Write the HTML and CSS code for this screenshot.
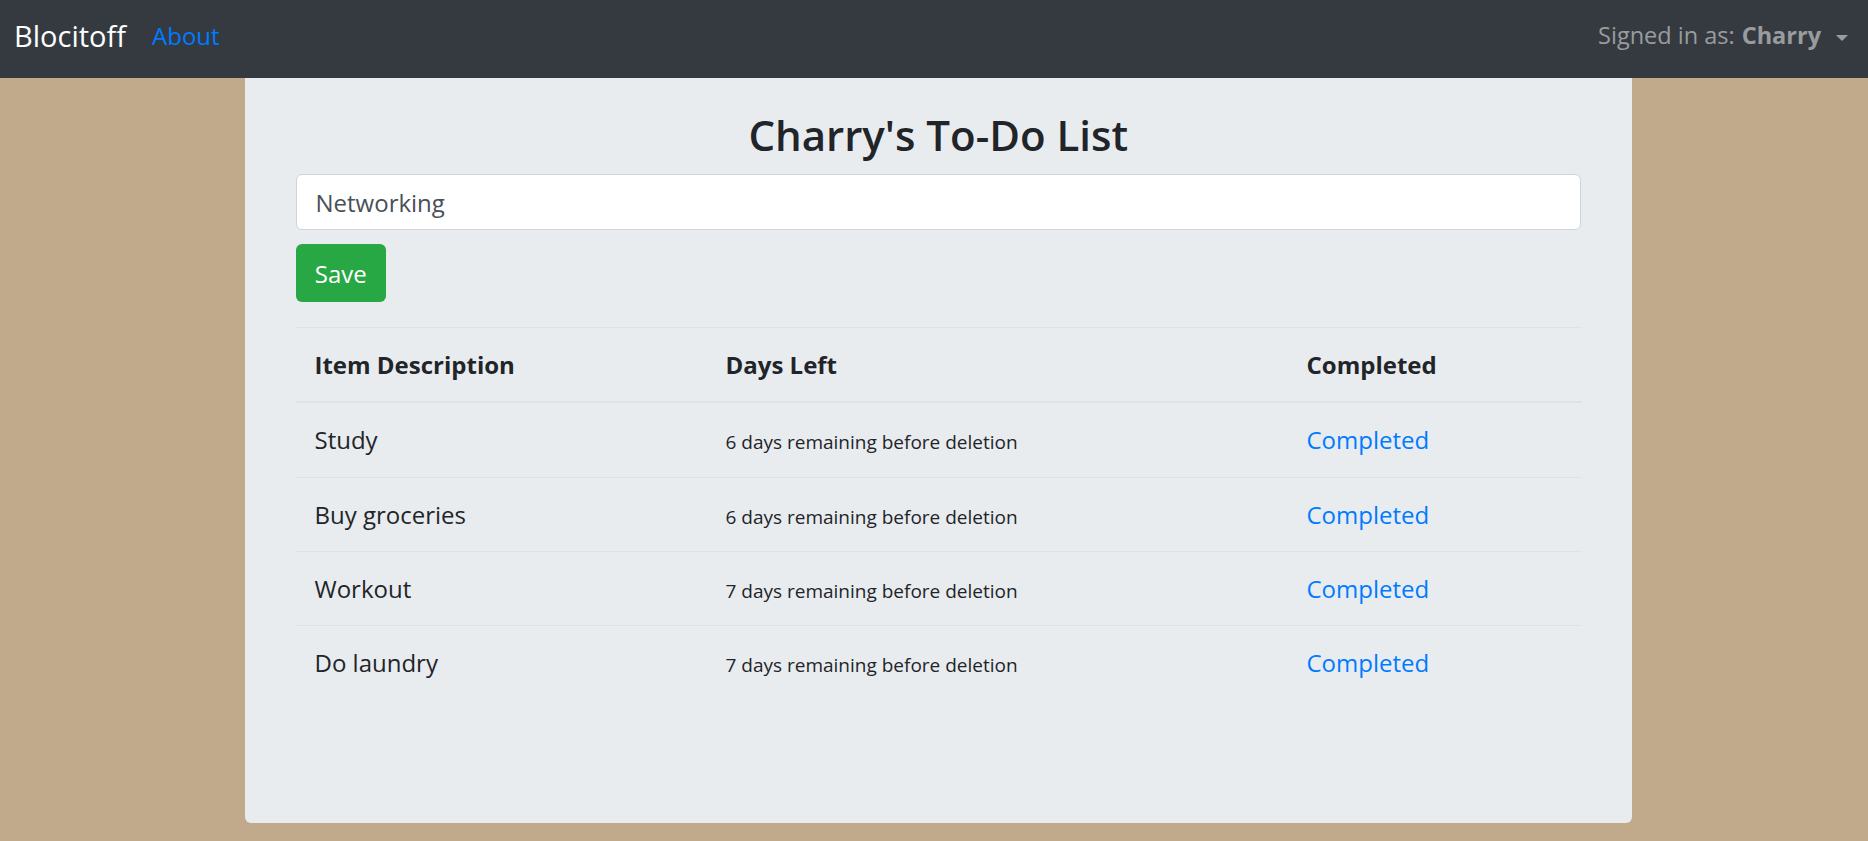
FILE: index.html
```html
<!DOCTYPE html>
<html lang="en">
<head>
<meta charset="utf-8">
<title>Blocitoff</title>
<link rel="stylesheet" href="styles.css">
</head>
<body>
<nav class="navbar">
  <a class="brand" href="#">Blocitoff</a>
  <a class="nav-about" href="#">About</a>
  <div class="user">Signed in as: <strong>Charry</strong><span class="caret"></span></div>
</nav>
<main class="card">
  <h1 class="title">Charry's To-Do List</h1>
  <form class="form">
    <input class="field" type="text" value="Networking">
    <button class="btn-save" type="button">Save</button>
  </form>
  <table class="items">
    <colgroup>
      <col class="c1"><col class="c2"><col class="c3">
    </colgroup>
    <thead>
      <tr><th>Item Description</th><th>Days Left</th><th>Completed</th></tr>
    </thead>
    <tbody>
      <tr><td>Study</td><td><small>6 days remaining before deletion</small></td><td><a href="#">Completed</a></td></tr>
      <tr><td>Buy groceries</td><td><small>6 days remaining before deletion</small></td><td><a href="#">Completed</a></td></tr>
      <tr><td>Workout</td><td><small>7 days remaining before deletion</small></td><td><a href="#">Completed</a></td></tr>
      <tr><td>Do laundry</td><td><small>7 days remaining before deletion</small></td><td><a href="#">Completed</a></td></tr>
    </tbody>
  </table>
</main>
</body>
</html>
```

FILE: styles.css
```css
* { box-sizing: border-box; }
html, body { margin: 0; padding: 0; }
body {
  background: #c1a98b;
  font-family: "Open Sans", "Noto Sans", sans-serif;
  color: #212529;
  font-size: 24px;
  line-height: 1.5;
}
a { text-decoration: none; color: #007bff; }

.navbar {
  height: 78px;
  background: #343a40;
  display: flex;
  align-items: center;
  padding: 0 20px 6px 14px;
}
.brand {
  color: #fff;
  font-size: 29px;
  line-height: 1.5;
  margin-right: 26px;
}
.nav-about {
  color: #007bff;
  font-size: 24px;
}
.user {
  margin-left: auto;
  color: rgba(255, 255, 255, 0.5);
  font-size: 23.5px;
  display: flex;
  align-items: center;
}
.user strong { font-weight: 700; margin-left: 7px; }
.caret {
  width: 0;
  height: 0;
  border-left: 6px solid transparent;
  border-right: 6px solid transparent;
  border-top: 6px solid rgba(255, 255, 255, 0.5);
  margin-left: 15px;
  margin-top: 4px;
}

.card {
  width: 1387px;
  height: 745px;
  margin: 0 0 0 245px;
  background: #e9ecef;
  border-radius: 0 0 6px 6px;
  padding: 31px 51px 0 50.5px;
}
.title {
  margin: 0;
  text-align: center;
  font-size: 42px;
  font-weight: 600;
  line-height: 52.8px;
}
.form {
  margin-top: 12.7px;
  display: flex;
  flex-direction: column;
  align-items: flex-start;
}
.field {
  width: 100%;
  height: 56px;
  border: 1px solid #ced4da;
  border-radius: 6px;
  background: #fff;
  padding: 0 19px;
  font-family: inherit;
  font-size: 24px;
  color: #495057;
  outline: none;
}
.btn-save {
  margin-top: 14px;
  width: 90.7px;
  height: 57.4px;
  border: 0;
  border-radius: 6px;
  background: #28a745;
  color: #fff;
  font-family: inherit;
  font-size: 24px;
  padding: 0;
}

.items {
  margin-top: 25.3px;
  width: 100%;
  border-collapse: collapse;
  table-layout: fixed;
}
.c1 { width: 411px; }
.c2 { width: 581px; }
.c3 { width: 294px; }
.items th, .items td {
  text-align: left;
  vertical-align: top;
  padding: 18px 19px;
  line-height: 37.3px;
  border-top: 1px solid #dee2e6;
}
.items th {
  font-weight: 700;
  border-bottom: 2px solid #dee2e6;
}
.items small { font-size: 19px; line-height: 1; }
```
